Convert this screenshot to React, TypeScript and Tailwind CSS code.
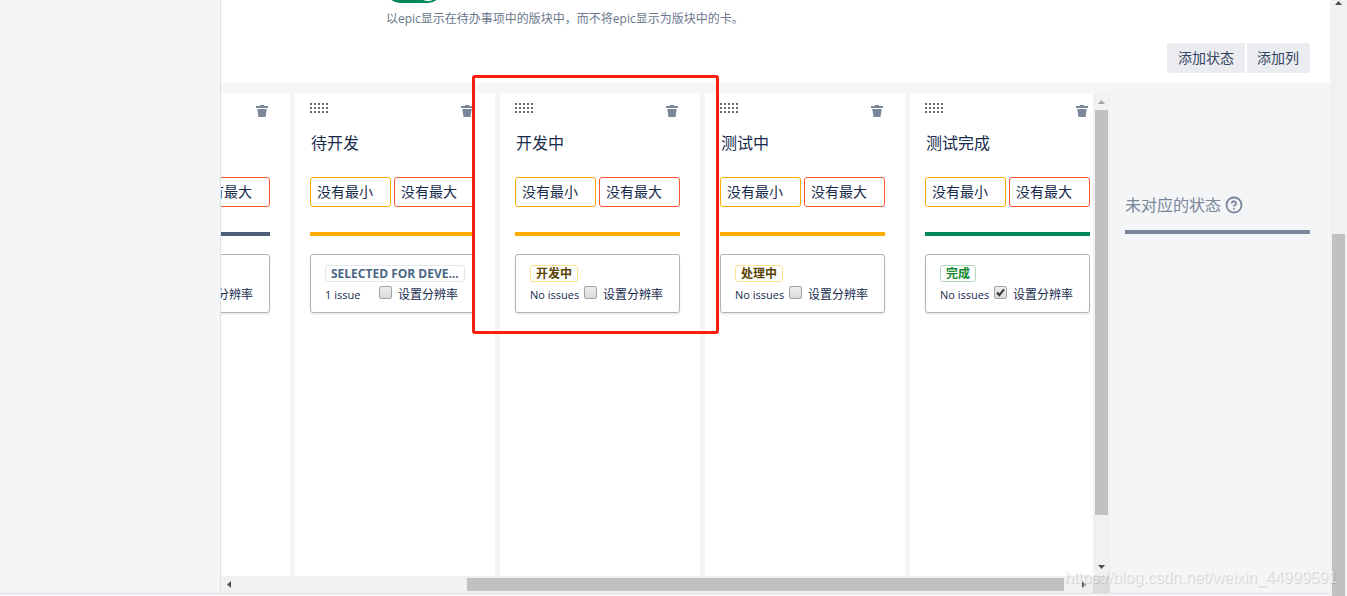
import { HelpCircle } from 'lucide-react'
import clsx from 'clsx'

type Column = {
  id: string
  title?: string
  bar: string
  status?: string
  statusStyle?: string
  count: string
  resolved?: boolean
}

const columns: Column[] = [
  { id: 'first', bar: 'bg-[#505f79]', count: '' },
  {
    id: 'selected',
    title: '待开发',
    bar: 'bg-[#ffab00]',
    status: 'SELECTED FOR DEVE...',
    statusStyle: 'border-[#e4e8ed] text-[#4a6785]',
    count: '1 issue',
  },
  {
    id: 'developing',
    title: '开发中',
    bar: 'bg-[#ffab00]',
    status: '开发中',
    statusStyle: 'border-[#ffe28c] text-[#594300]',
    count: 'No issues',
  },
  {
    id: 'testing',
    title: '测试中',
    bar: 'bg-[#ffab00]',
    status: '处理中',
    statusStyle: 'border-[#ffe28c] text-[#594300]',
    count: 'No issues',
  },
  {
    id: 'tested',
    title: '测试完成',
    bar: 'bg-[#00875a]',
    status: '完成',
    statusStyle: 'border-[#b2d8b9] text-[#14892c]',
    count: 'No issues',
    resolved: true,
  },
]

const arrows = {
  up: 'M0 4h7L3.5 0z',
  down: 'M0 0h7L3.5 4z',
  left: 'M4 0v7L0 3.5z',
  right: 'M0 0v7l4-3.5z',
}

function Arrow({ dir, className }: { dir: keyof typeof arrows; className: string }) {
  const flat = dir === 'up' || dir === 'down'
  return (
    <svg width={flat ? 7 : 4} height={flat ? 4 : 7} className={clsx('shrink-0', className)} aria-hidden="true">
      <path d={arrows[dir]} fill="currentColor" />
    </svg>
  )
}

function DragHandle() {
  return (
    <svg width="18" height="10" fill="#6b6b6b" shapeRendering="crispEdges" aria-hidden="true">
      {[0, 4, 8].map((y) =>
        [0, 4, 8, 12, 16].map((x) => <rect key={`${x}-${y}`} x={x} y={y} width="2" height="2" />)
      )}
    </svg>
  )
}

function TrashIcon() {
  return (
    <svg width="12" height="12" viewBox="0 0 12 12" fill="#7a869a" aria-hidden="true">
      <path d="M0 1h4V0h4v1h4v2H0zM1.3 4h9.4L9.6 11.4q-.1.6-.7.6H3.1q-.6 0-.7-.6z" />
    </svg>
  )
}

function StatusCard({ column }: { column: Column }) {
  return (
    <div className="mt-[18px] h-[59px] rounded-[3px] border border-[#b3b3b3] bg-white px-3.5 pt-2.5 shadow-[0_2px_2px_rgba(0,0,0,0.08)]">
      <div className="flex h-[18px]">
        {column.status && (
          <span
            className={clsx(
              'h-[17px] whitespace-nowrap rounded-[3px] border px-[5px] text-[12px] leading-[15px] font-bold',
              column.statusStyle
            )}
          >
            {column.status}
          </span>
        )}
      </div>
      <div className="flex h-6 items-center text-[12px] whitespace-nowrap">
        <span className="w-[54px] shrink-0 text-[11px]">{column.count}</span>
        <label className="flex items-center gap-1.5">
          <span className="relative mb-1.5 flex">
            <input
              type="checkbox"
              defaultChecked={column.resolved}
              className="peer size-[13px] appearance-none rounded-[2px] border border-[#a3a3a3] bg-linear-to-b from-[#eeeeee] to-[#dadada]"
            />
            <svg
              viewBox="0 0 13 13"
              className="pointer-events-none absolute inset-0 hidden size-[13px] peer-checked:block"
              aria-hidden="true"
            >
              <path d="M3 6.5l2.3 2.6L10 3.4" fill="none" stroke="#3c3c3c" strokeWidth="2.2" />
            </svg>
          </span>
          设置分辨率
        </label>
      </div>
    </div>
  )
}

function BoardColumn({ column }: { column: Column }) {
  return (
    <section className="w-[200px] shrink-0 bg-white pt-2.5 pr-5 pl-[15px]">
      <div className="flex h-6 items-start justify-between">
        <DragHandle />
        <button type="button" aria-label="删除" className="mt-0.5 mr-0.5">
          <TrashIcon />
        </button>
      </div>
      <h3 className="ml-px mt-1 h-6 text-[16px] leading-6">{column.title}</h3>
      <div className="mt-[22px] flex gap-[3px] text-[14px]">
        <input
          aria-label="最小"
          defaultValue="没有最小"
          className="h-[30px] w-0 flex-1 rounded-[3px] border border-[#ffab00] px-1.5 pb-0.5"
        />
        <input
          aria-label="最大"
          defaultValue="没有最大"
          className="h-[30px] w-0 flex-1 rounded-[3px] border border-[#ff5630] px-1.5 pb-0.5"
        />
      </div>
      <div className={clsx('mt-[25px] h-1', column.bar)} />
      <StatusCard column={column} />
    </section>
  )
}

function Board() {
  return (
    <div className="flex min-w-0 flex-1 flex-col">
      <div className="flex flex-1">
        <div className="min-w-0 flex-1 overflow-hidden">
          {/* scrolled to the right, the first column is partly hidden */}
          <div className="-ml-[131px] flex h-full gap-[5px]">
            {columns.map((column) => (
              <BoardColumn key={column.id} column={column} />
            ))}
          </div>
        </div>
        <div className="flex w-[17px] flex-col items-center bg-[#f1f1f1]">
          <Arrow dir="up" className="mt-[7px] text-[#a3a3a3]" />
          <div className="mt-1.5 h-[405px] w-[13px] bg-[#c1c1c1]" />
          <Arrow dir="down" className="mt-auto mb-[7px] text-[#505050]" />
        </div>
      </div>
      <div className="flex h-[17px] bg-[#f1f1f1]">
        <div className="flex flex-1 items-center">
          <Arrow dir="left" className="ml-1.5 text-[#505050]" />
          <div className="ml-[236px] mr-[18px] h-[13px] flex-1 bg-[#c1c1c1]" />
          <Arrow dir="right" className="mr-[7px] text-[#505050]" />
        </div>
        <div className="w-[17px] bg-[#dcdcdc]" />
      </div>
    </div>
  )
}

export default function App() {
  return (
    <div className="relative flex h-screen overflow-hidden bg-[#f4f5f7] font-['Open_Sans','Noto_Sans_CJK_SC',sans-serif] text-[#172b4d]">
      <div className="mb-0.5 flex min-w-0 flex-1 border-b border-[#dfe1e6]">
        <aside className="w-[221px] shrink-0 border-r border-[#dfe1e6]" />
        <main className="flex min-w-0 flex-1 flex-col">
          <header className="h-[83px] bg-white">
            <div className="ml-[165px]">
              <button
                type="button"
                role="switch"
                aria-checked="true"
                aria-label="epic"
                className="-mt-[25px] flex h-7 w-14 items-center justify-end rounded-full bg-[#00875a] px-0.5"
              >
                <span className="size-6 rounded-full bg-white" />
              </button>
              <p className="mt-[7px] text-[12px] leading-[18px] text-[#6b778c]">
                以epic显示在待办事项中的版块中，而不将epic显示为版块中的卡。
              </p>
            </div>
            <div className="mt-[15px] mr-5 flex justify-end gap-0.5 text-[14px] text-[#344563]">
              <button type="button" className="h-[30px] rounded-l-[3px] bg-[#ebecf0] px-[11px] pb-0.5">
                添加状态
              </button>
              <button type="button" className="h-[30px] rounded-r-[3px] bg-[#ebecf0] pr-[11px] pb-0.5 pl-2.5">
                添加列
              </button>
            </div>
          </header>
          <div className="flex flex-1 pt-2.5">
            <Board />
            <section className="w-[220px] shrink-0 pl-[15px] pr-5 pt-[100px]">
              <h3 className="flex items-center gap-1 text-[16px] leading-6 text-[#7a869a]">
                未对应的状态
                <HelpCircle size={18} strokeWidth={2.4} />
              </h3>
              <div className="mt-[13px] h-1 bg-[#7a869a]" />
            </section>
          </div>
        </main>
      </div>

      <div className="flex w-[17px] shrink-0 flex-col items-center bg-[#f1f1f1]">
        <Arrow dir="up" className="mt-px text-[#505050]" />
        <div className="mt-[229px] w-[13px] flex-1 bg-[#c1c1c1]" />
      </div>

      <div className="pointer-events-none absolute left-[472px] top-[75px] h-[259px] w-[247px] rounded-[3px] border-3 border-[#ff1d0d]" />
      <div className="pointer-events-none absolute right-2.5 bottom-1.5 font-['Liberation_Sans',sans-serif] text-[16px] leading-6 text-white/60 [text-shadow:1px_1px_1px_rgba(0,0,0,0.16)]">
        https://blog.csdn.net/weixin_44999591
      </div>
    </div>
  )
}
